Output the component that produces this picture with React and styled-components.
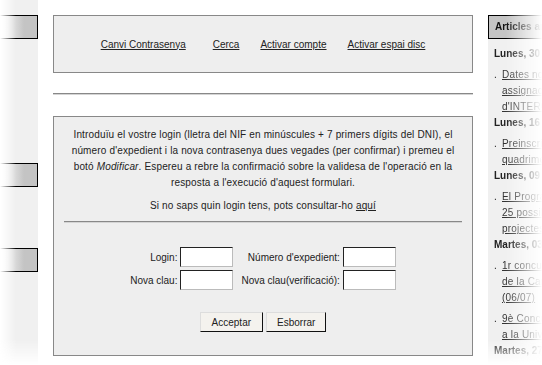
import * as React from "react";
import styled, { createGlobalStyle } from "styled-components";

const GlobalStyle = createGlobalStyle`
  html, body {
    margin: 0;
    padding: 0;
    background: #fff;
    overflow: hidden;
  }
  body {
    font-family: "Liberation Sans", Arial, sans-serif;
    font-size: 10px;
    color: #222;
  }
`;

const Page = styled.div`
  display: flex;
  width: 542px;
  height: 365px;
  overflow: hidden;
`;

const LeftFade = styled.div`
  width: 38px;
  flex-shrink: 0;
  -webkit-mask-image: linear-gradient(to right, transparent 0, #000 16px);
  mask-image: linear-gradient(to right, transparent 0, #000 16px);
`;

const LeftCol = styled.div`
  height: 100%;
  background: #f0f0f0;
  padding-top: 15px;
  box-sizing: border-box;
  -webkit-mask-image: linear-gradient(to bottom, #000 340px, transparent 365px);
  mask-image: linear-gradient(to bottom, #000 340px, transparent 365px);
`;

const SideTab = styled.div`
  height: 22px;
  margin-top: ${(p) => p.$top || 0}px;
  background: linear-gradient(to right, #fff 0, #c4c4c4 24px);
  border: 1px solid #000;
  border-left: none;
`;

const Main = styled.div`
  width: 420px;
  flex-shrink: 0;
  padding: 15px 15px 0;
`;

const Panel = styled.div`
  background: #eee;
  border: 1px solid #888;
  box-sizing: border-box;
`;

const NavPanel = styled(Panel)`
  height: 58px;
  display: flex;
  align-items: center;
  justify-content: center;
  gap: 21px;
`;

const Link = styled.a`
  color: #222;
  text-decoration: underline;
  cursor: pointer;
  margin-right: ${(p) => p.$extra || 0}px;
`;

const Rule = styled.div`
  height: 0;
  border-top: 1px solid #888;
  border-bottom: 1px solid #d4d4d4;
  margin: ${(p) => p.$margin};
`;

const FormPanel = styled(Panel)`
  height: 240px;
  padding: 10px 10px 0;
  text-align: center;
`;

const Intro = styled.p`
  margin: 0;
  line-height: 16px;
  white-space: nowrap;
  letter-spacing: 0.15px;
`;

const Hint = styled(Intro)`
  margin-top: 7px;
`;

const FieldGrid = styled.div`
  display: grid;
  grid-template-columns: auto 53px auto 53px;
  column-gap: 3px;
  row-gap: 3px;
  justify-content: center;
  align-items: center;
  margin-top: 24px;
`;

const Label = styled.label`
  text-align: right;
  padding-left: ${(p) => (p.$second ? 5 : 0)}px;
`;

const Input = styled.input`
  width: 53px;
  height: 20px;
  box-sizing: border-box;
  background: #fff;
  border-style: solid;
  border-width: 1px;
  border-color: #222 #bbb #bbb #222;
  padding: 0 2px;
  font: inherit;
`;

const Buttons = styled.div`
  display: flex;
  justify-content: center;
  gap: 3px;
  margin-top: 22px;
`;

const Button = styled.button`
  height: 20px;
  padding: 0 ${(p) => p.$pad}px;
  background: #f4f2ee;
  border-style: solid;
  border-width: 1px;
  border-color: #ddd #111 #111 #ddd;
  font-family: "Liberation Sans", Arial, sans-serif;
  font-size: 10px;
  color: #222;
`;

const SideFade = styled.div`
  width: 160px;
  flex-shrink: 0;
  padding-top: 15px;
  -webkit-mask-image: linear-gradient(to right, #000 18px, transparent 54px);
  mask-image: linear-gradient(to right, #000 18px, transparent 54px);
`;

const Sidebar = styled.div`
  height: 350px;
  background: #f0f0f0;
  -webkit-mask-image: linear-gradient(to bottom, #000 325px, transparent 350px);
  mask-image: linear-gradient(to bottom, #000 325px, transparent 350px);
`;

const SideTitle = styled.div`
  height: 22px;
  line-height: 22px;
  padding-left: 6px;
  background: #c4c4c4;
  border: 1px solid #000;
  border-right: none;
  font-weight: bold;
  color: #111;
  white-space: nowrap;
`;

const SideBody = styled.div`
  padding: 7px 0 0 6px;
`;

const DayHead = styled.div`
  line-height: 16px;
  font-weight: bold;
  white-space: nowrap;
`;

const Item = styled.div`
  display: flex;
  margin-top: 5px;
  line-height: 16px;
`;

const Bullet = styled.span`
  width: 8px;
  flex-shrink: 0;
`;

const ItemLines = styled.div`
  display: flex;
  flex-direction: column;
  align-items: flex-start;
`;

const ItemLink = styled.a`
  color: #333;
  text-decoration: underline;
  white-space: nowrap;
  letter-spacing: 0.2px;
`;

const articles = [
  {
    day: "Lunes, 30 de juny",
    items: [["Dates noves de", "assignació de places", "d'INTERCANVI"]],
  },
  { day: "Lunes, 16 de juny", items: [["Preinscripció del", "quadrimestre"]] },
  {
    day: "Lunes, 09 de juny",
    items: [["El Programa ofereix", "25 possibles", "projectes"]],
  },
  {
    day: "Martes, 03 de juny",
    items: [
      ["1r concurs d'idees", "de la Cambra", "(06/07)"],
      ["9è Concurs de fotos", "a la Universitat"],
    ],
  },
  { day: "Martes, 27 de maig", items: [] },
];

const App = () => {
  return (
    <Page>
      <GlobalStyle />
      <LeftFade>
        <LeftCol>
          <SideTab />
          <SideTab $top={124} />
          <SideTab $top={61} />
        </LeftCol>
      </LeftFade>
      <Main>
        <NavPanel>
          <Link $extra={6}>Canvi Contrasenya</Link>
          <Link>Cerca</Link>
          <Link>Activar compte</Link>
          <Link>Activar espai disc</Link>
        </NavPanel>
        <Rule $margin="20px 0 21px" />
        <FormPanel>
          <Intro>
            Introduïu el vostre login (lletra del NIF en minúscules + 7 primers
            dígits del DNI), el
            <br />
            número d'expedient i la nova contrasenya dues vegades (per
            confirmar) i premeu el
            <br />
            botó <i>Modificar</i>. Espereu a rebre la confirmació sobre la
            validesa de l'operació en la
            <br />
            resposta a l'execució d'aquest formulari.
          </Intro>
          <Hint>
            Si no saps quin login tens, pots consultar-ho <Link>aquí</Link>
          </Hint>
          <Rule $margin="7px 0 0" />
          <FieldGrid>
            <Label>Login:</Label>
            <Input type="text" />
            <Label $second>Número d'expedient:</Label>
            <Input type="text" />
            <Label>Nova clau:</Label>
            <Input type="password" />
            <Label $second>Nova clau(verificació):</Label>
            <Input type="password" />
          </FieldGrid>
          <Buttons>
            <Button $pad={11}>Acceptar</Button>
            <Button $pad={10}>Esborrar</Button>
          </Buttons>
        </FormPanel>
      </Main>
      <SideFade>
        <Sidebar>
          <SideTitle>Articles anteriors</SideTitle>
          <SideBody>
            {articles.map((a) => (
              <React.Fragment key={a.day}>
                <DayHead>{a.day}</DayHead>
                {a.items.map((lines) => (
                  <Item key={lines[0]}>
                    <Bullet>.</Bullet>
                    <ItemLines>
                      {lines.map((l) => (
                        <ItemLink key={l}>{l}</ItemLink>
                      ))}
                    </ItemLines>
                  </Item>
                ))}
              </React.Fragment>
            ))}
          </SideBody>
        </Sidebar>
      </SideFade>
    </Page>
  );
};

export default App;
